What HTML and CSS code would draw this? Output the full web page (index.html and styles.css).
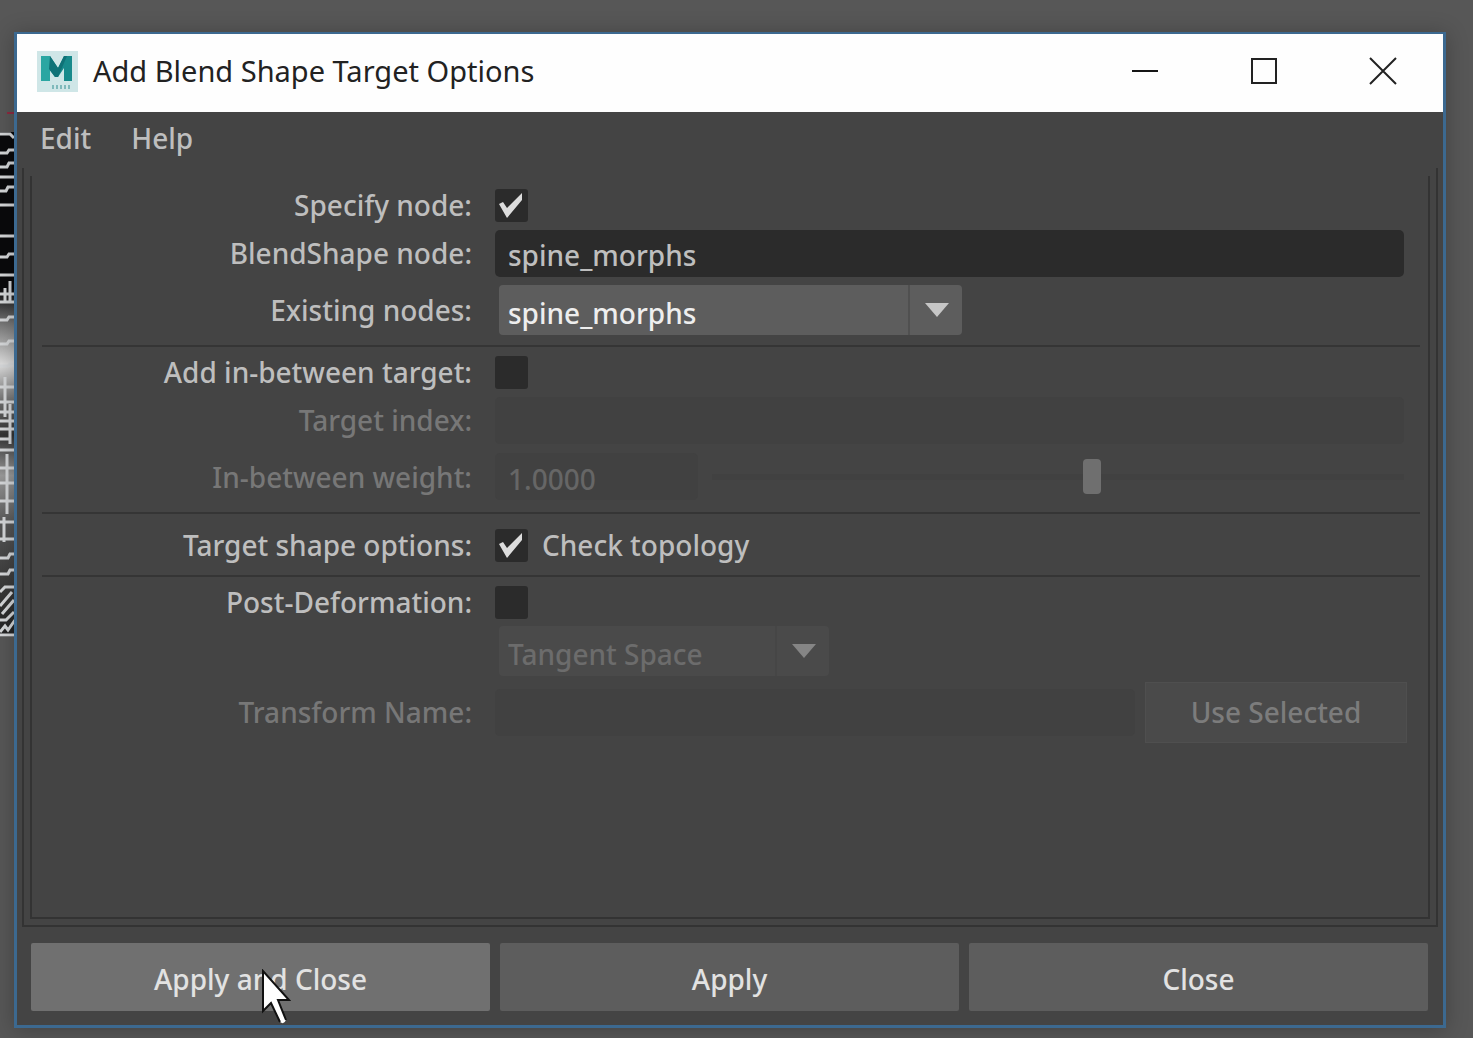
FILE: index.html
```html
<!DOCTYPE html>
<html lang="en">
<head>
<meta charset="utf-8">
<title>Add Blend Shape Target Options</title>
<link rel="stylesheet" href="styles.css">
</head>
<body class="desktop">
<svg class="viewport" width="15" height="528" viewBox="0 0 15 528" aria-hidden="true">
  <defs>
    <linearGradient id="shade" x1="0" y1="0" x2="0" y2="1">
      <stop offset="0" stop-color="#0a0a0c"/><stop offset=".31" stop-color="#0a0a0c"/>
      <stop offset=".38" stop-color="#777"/><stop offset=".46" stop-color="#ddd"/>
      <stop offset=".54" stop-color="#666"/><stop offset=".6" stop-color="#333"/>
      <stop offset=".68" stop-color="#999"/><stop offset=".78" stop-color="#555"/>
      <stop offset="1" stop-color="#222"/>
    </linearGradient>
  </defs>
  <path d="M0 20h15v505H0z" fill="url(#shade)"/>
  <path d="M7 1h8" stroke="#8e2a40" stroke-width="2"/>
  <g fill="none" stroke="#d4d6d8" stroke-width="3">
    <path d="M0 22h10l4 4M0 41h7l2-3h6M0 55h7l2-4h6M0 65h15M0 79h6l2-4h7M0 93h15M0 124h15M0 145h7l2-3h6M0 163h15M10 169v20M0 182h15M5 176v14M0 190h15M0 208h7l2-3h6M0 232h7l2-3h6M0 254h8l2-2h5"/>
    <path d="M5 265v40M10 292v40M0 275h15M0 290h15M0 300h15M0 309h15M0 317h15M0 327h10M0 338h15M7 342v60M0 356h15M0 371h15M0 389h15M0 410h15M4 405v25M0 427h15M0 446h8l2-4h5M0 462h8l2-4h5"/>
    <path d="M0 480l5-5h10M0 494l12-14M2 502l12-14M0 508h6l8-8M0 520l5-6 3 4 7-10M0 523h15"/>
  </g>
</svg>

<main class="window">
  <header class="titlebar">
    <svg class="logo" width="41" height="41" viewBox="0 0 41 41" aria-hidden="true">
      <path d="M0 0h41v41H0z" fill="#cfe6e7"/>
      <path d="M4 5h9l8 12 6-12h8v25h-8V17l-6 9h-3l-6-8v12H4z" fill="#178a8b"/>
      <path d="M4 5h9v25H4z" fill="#2aa6a2"/>
      <path d="M13 5l8 12 6-12h3l-9 21h-3l-6-8z" fill="#0f7277"/>
      <path d="M16 34v4M20 34v4M24 34v4M28 34v4M32 34v4" stroke="#7fb9bb" stroke-width="2"/>
    </svg>
    <h1 class="title">Add Blend Shape Target Options</h1>
    <div class="controls">
      <button class="control" type="button" aria-label="Minimize"><svg width="28" height="28" viewBox="0 0 28 28"><path d="M1 14h26" stroke="#151515" stroke-width="2"/></svg></button>
      <button class="control" type="button" aria-label="Maximize"><svg width="28" height="28" viewBox="0 0 28 28"><path d="M2 2h24v24H2z" fill="none" stroke="#222" stroke-width="2"/></svg></button>
      <button class="control" type="button" aria-label="Close window"><svg width="28" height="28" viewBox="0 0 28 28"><path d="M1 1l26 26M27 1L1 27" stroke="#222" stroke-width="2"/></svg></button>
    </div>
  </header>

  <nav class="menubar">
    <button class="menu" type="button">Edit</button>
    <button class="menu" type="button">Help</button>
  </nav>

  <form class="form">
    <div class="frame">
      <div class="panel">
        <section class="group">
          <div class="row">
            <label class="label" for="specify">Specify node:</label>
            <input class="check" id="specify" type="checkbox" checked>
          </div>
          <div class="row">
            <label class="label" for="node">BlendShape node:</label>
            <input class="text" id="node" type="text" value="spine_morphs">
          </div>
          <div class="row row-tall">
            <label class="label" for="existing">Existing nodes:</label>
            <span class="picker">
              <select class="select" id="existing"><option>spine_morphs</option></select>
              <svg class="arrow" width="24" height="14" viewBox="0 0 24 14" aria-hidden="true"><path d="M0 0h24L12 14z"/></svg>
            </span>
          </div>
        </section>
        <section class="group group-ruled">
          <div class="row">
            <label class="label" for="between">Add in-between target:</label>
            <input class="check" id="between" type="checkbox">
          </div>
          <div class="row">
            <label class="label label-off" for="index">Target index:</label>
            <input class="text" id="index" type="text" disabled>
          </div>
          <div class="row row-tall">
            <label class="label label-off" for="weight">In-between weight:</label>
            <span class="pair">
              <input class="text number" id="weight" type="text" value="1.0000" disabled>
              <input class="slider" type="range" min="-10" max="10" value="1" aria-label="In-between weight slider" disabled>
            </span>
          </div>
        </section>
        <section class="group group-ruled">
          <div class="row row-single">
            <span class="label">Target shape options:</span>
            <span class="pair">
              <input class="check" id="topology" type="checkbox" checked>
              <label for="topology">Check topology</label>
            </span>
          </div>
        </section>
        <section class="group group-ruled">
          <div class="row">
            <label class="label" for="post">Post-Deformation:</label>
            <input class="check" id="post" type="checkbox">
          </div>
          <div class="row">
            <span class="label"></span>
            <span class="picker picker-off">
              <select class="select" aria-label="Deformation space" disabled><option>Tangent Space</option></select>
              <svg class="arrow" width="24" height="14" viewBox="0 0 24 14" aria-hidden="true"><path d="M0 0h24L12 14z"/></svg>
            </span>
          </div>
          <div class="row row-transform">
            <label class="label label-off" for="transform">Transform Name:</label>
            <span class="pair pair-tight">
              <input class="text" id="transform" type="text" disabled>
              <button class="use" type="button" disabled>Use Selected</button>
            </span>
          </div>
        </section>
      </div>
    </div>

    <footer class="actions">
      <button class="action action-hover" type="button">Apply and Close
        <svg class="cursor" width="32" height="58" viewBox="0 0 32 58" aria-hidden="true"><path d="M2 2v40l8-8 9 19q4 3 6-2l-8-20h11z" fill="#fff"/><path d="M25 51l-8-20h11L2 2v40l8-8 9 19" fill="none" stroke="#111" stroke-width="2"/></svg>
      </button>
      <button class="action" type="button">Apply</button>
      <button class="action" type="button">Close</button>
    </footer>
  </form>
</main>
</body>
</html>
```
FILE: styles.css
```css
* { box-sizing: border-box; }

button, input, select {
  font: inherit;
  color: inherit;
  margin: 0;
  border: 0;
}

.desktop {
  margin: 0;
  min-height: 100vh;
  display: flex;
  padding: 32px 27px 10px 14px;
  background: #575757;
  font: 500 28px/40px "Noto Sans", "Open Sans", sans-serif;
  color: #bebebe;
}

/* Strip of the 3D viewport that shows behind the dialog */
.viewport {
  position: absolute;
  left: 0;
  top: 112px;
}

.window {
  position: relative;
  flex: 1;
  min-width: 0;
  display: flex;
  flex-direction: column;
  background: #444;
  border: 3px solid #3c6990;
  border-top-width: 2px;
  box-shadow: 0 2px 20px rgba(0, 0, 0, .25);
}

.titlebar {
  display: flex;
  align-items: center;
  height: 78px;
  padding: 0 0 4px 20px;
  background: #fefefe;
  color: #222;
}

.logo { margin-right: 15px; }

.title {
  flex: 1;
  margin: 0;
  font-size: 29px;
  font-weight: 400;
}

.controls { display: flex; }

.control {
  width: 119px;
  height: 74px;
  padding: 0 2px 0 0;
  background: none;
  display: grid;
  place-items: center;
}

.menubar {
  display: flex;
  gap: 40px;
  height: 56px;
  padding: 6px 23px;
}

.menu {
  padding: 0;
  height: 40px;
  background: none;
}

.form {
  flex: 1;
  display: flex;
  flex-direction: column;
  padding: 0 5px 14px;
}

.frame {
  flex: 1;
  display: flex;
  padding: 8px 6px 6px;
  border: solid #333;
  border-width: 0 2px 2px;
}

.panel {
  flex: 1;
  padding: 5px 8px 5px 10px;
  border: solid #333;
  border-width: 0 2px 2px;
}

.group-ruled {
  padding-top: 1px;
  border-top: 2px solid #353535;
}

.row {
  display: grid;
  grid-template-columns: 430px minmax(0, 1fr);
  column-gap: 23px;
  align-items: center;
  min-height: 48px;
  padding-right: 16px;
}

.row-tall {
  min-height: 68px;
  padding-bottom: 3px;
}

.row-single { min-height: 60px; }
.row-transform { min-height: 72px; }

.label {
  text-align: right;
  white-space: nowrap;
}

.label-off { color: #777; }

.check {
  appearance: none;
  width: 33px;
  height: 33px;
  border-radius: 3px;
  background: #2b2b2b;
}

.check:checked {
  background: #2b2b2b url("data:image/svg+xml,%3Csvg xmlns='http://www.w3.org/2000/svg' viewBox='0 0 33 33'%3E%3Cpath d='M4 15l4-2 4 6L27 4v7L12 29z' fill='%23ddd'/%3E%3C/svg%3E");
}

.text {
  width: 100%;
  height: 47px;
  min-width: 0;
  padding: 4px 13px 0;
  border-radius: 5px;
  background: #2b2b2b;
}

.text:disabled {
  background: #414141;
  color: #666;
}

.number { width: 203px; }

.pair {
  display: flex;
  align-items: center;
  gap: 14px;
}

.pair-tight {
  gap: 10px;
  margin-right: -3px;
}

.picker {
  position: relative;
  width: 463px;
  margin-left: 4px;
  color: #eee;
}

.select {
  appearance: none;
  display: block;
  width: 100%;
  height: 50px;
  padding: 6px 60px 0 9px;
  border-radius: 4px;
  background: linear-gradient(#505050, #505050) right 52px top / 2px 100% no-repeat #5d5d5d;
  opacity: 1;
}

.arrow {
  position: absolute;
  right: 13px;
  top: 18px;
  fill: #c6c6c6;
  pointer-events: none;
}

.picker-off {
  width: 330px;
  color: #6c6c6c;
}

.picker-off .select {
  background: linear-gradient(#464646, #464646) right 52px top / 2px 100% no-repeat #4a4a4a;
}

.picker-off .arrow { fill: #858585; }

.slider {
  appearance: none;
  flex: 1;
  min-width: 0;
  height: 36px;
  background: linear-gradient(#414141, #414141) center / 100% 6px no-repeat;
}

.slider::-webkit-slider-thumb {
  appearance: none;
  width: 18px;
  height: 35px;
  border-radius: 4px;
  background: #6f6f6f;
}

.use {
  flex: none;
  width: 262px;
  height: 61px;
  background: #4a4a4a;
  border: 1px solid #4f4f4f;
  color: #7c7c7c;
}

.actions {
  display: grid;
  grid-template-columns: repeat(3, 1fr);
  gap: 10px;
  padding: 16px 10px 0 9px;
}

.action {
  position: relative;
  height: 68px;
  padding: 4px 0 0;
  border-radius: 2px;
  background: #5d5d5d;
  color: #e2e2e2;
}

.action-hover { background: #707070; }

.cursor {
  position: absolute;
  left: 50%;
  top: 26px;
}
```
